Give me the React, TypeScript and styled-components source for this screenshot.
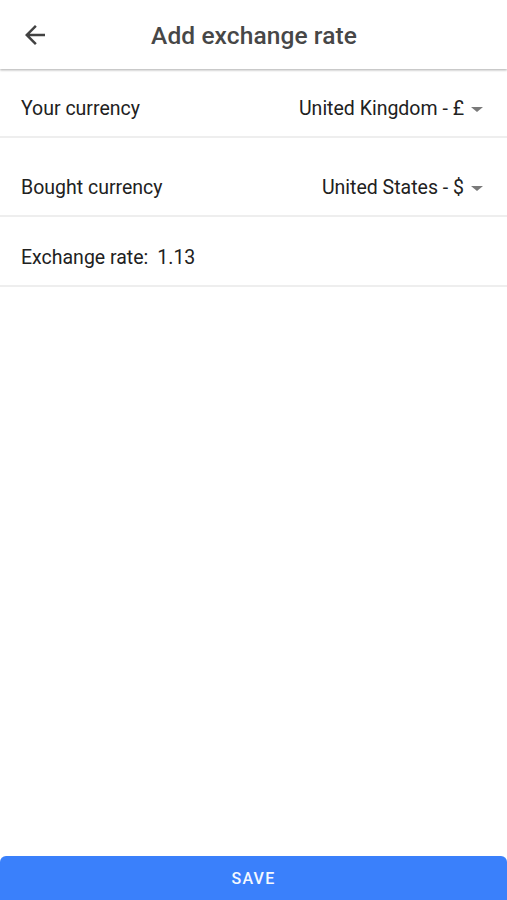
import React from "react";
import styled, { createGlobalStyle } from "styled-components";

const Global = createGlobalStyle`
  html, body { margin: 0; padding: 0; background: #ffffff; }
  body { font-family: Roboto, "Noto Sans", Arial, sans-serif; }
  #root { min-height: 100vh; }
`;

const Screen = styled.div`
  display: flex;
  flex-direction: column;
  height: 900px;
  width: 100%;
  background: #fff;
  overflow: hidden;
`;

const Header = styled.header`
  position: relative;
  display: flex;
  align-items: center;
  justify-content: center;
  height: 69px;
  flex: none;
  background: #fff;
  box-shadow: 0 1px 2px rgba(0, 0, 0, 0.22), 0 2px 2px rgba(0, 0, 0, 0.08);
  z-index: 1;
`;

const BackButton = styled.button`
  position: absolute;
  left: 20px;
  top: 20px;
  width: 30px;
  height: 30px;
  padding: 0;
  border: none;
  background: transparent;
  display: flex;
  align-items: center;
  justify-content: center;
  color: #424242;
`;

const Title = styled.h1`
  margin: 0;
  font-size: 24.5px;
  font-weight: 500;
  color: #474747;
  letter-spacing: 0.1px;
  padding-left: 1px;
  padding-top: 1px;
`;

const Content = styled.main`
  flex: 1;
  display: flex;
  flex-direction: column;
  padding-top: 1px;
`;

const Row = styled.div<{ $h: number }>`
  display: flex;
  align-items: flex-end;
  justify-content: space-between;
  height: ${(p) => p.$h}px;
  box-sizing: border-box;
  padding: 0 24px 16px 21px;
  border-bottom: 2px solid #eeeeee;
`;

const Label = styled.span`
  font-size: 19.5px;
  color: #212121;
  line-height: 22px;
`;

const Select = styled.div`
  display: flex;
  align-items: center;
  gap: 7px;
  font-size: 19.5px;
  color: #212121;
  line-height: 22px;
`;

const Caret = styled.span`
  width: 0;
  height: 0;
  border-left: 6px solid transparent;
  border-right: 6px solid transparent;
  border-top: 5px solid #7a7a7a;
  margin-top: 1px;
`;

const RateValue = styled.span`
  margin-left: 9px;
`;

const SaveButton = styled.button`
  flex: none;
  height: 44px;
  width: 100%;
  border: none;
  border-radius: 6px 6px 0 0;
  background: #3a80fb;
  color: #f4f8ff;
  font-family: Roboto, "Noto Sans", Arial, sans-serif;
  font-size: 16px;
  font-weight: 500;
  letter-spacing: 1.2px;
  padding-top: 1px;
`;

const ArrowBack = () => (
  <svg width="30" height="30" viewBox="0 0 24 24" fill="currentColor">
    <path d="M20 11H7.83l5.59-5.59L12 4l-8 8 8 8 1.41-1.41L7.83 13H20v-2z" />
  </svg>
);

export default function App() {
  return (
    <>
      <Global />
      <Screen>
        <Header>
          <BackButton aria-label="Back">
            <ArrowBack />
          </BackButton>
          <Title>Add exchange rate</Title>
        </Header>
        <Content>
          <Row $h={68}>
            <Label>Your currency</Label>
            <Select>
              United Kingdom - £<Caret />
            </Select>
          </Row>
          <Row $h={79}>
            <Label>Bought currency</Label>
            <Select>
              United States - $<Caret />
            </Select>
          </Row>
          <Row $h={70}>
            <Label>
              Exchange rate:<RateValue>1.13</RateValue>
            </Label>
          </Row>
        </Content>
        <SaveButton>SAVE</SaveButton>
      </Screen>
    </>
  );
}
